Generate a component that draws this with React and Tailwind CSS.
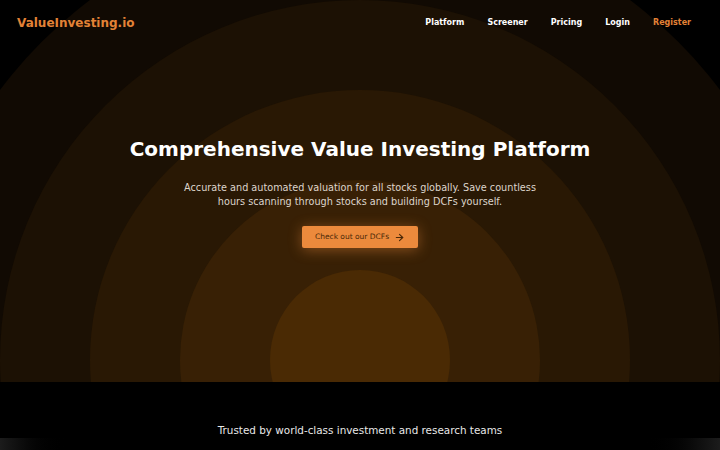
import React from "react";

const font = { fontFamily: '"DejaVu Sans", "Noto Sans", sans-serif' };

function ArrowRight() {
  return (
    <svg width="11" height="11" viewBox="0 0 24 24" fill="none" stroke="currentColor" strokeWidth="2.4" strokeLinecap="round" strokeLinejoin="round">
      <path d="M5 12h14" />
      <path d="m12 5 7 7-7 7" />
    </svg>
  );
}

export default function App() {
  return (
    <div className="w-[720px] h-[450px] overflow-hidden bg-black text-white" style={font}>
      <section className="relative h-[382px] overflow-hidden bg-black">
        {/* concentric glow rings centred on the lower middle of the hero */}
        <div className="absolute left-[-90px] top-[-90px] w-[900px] h-[900px] rounded-full bg-[#110a03]" />
        <div className="absolute left-0 top-0 w-[720px] h-[720px] rounded-full bg-[#1c1104]" />
        <div className="absolute left-[90px] top-[90px] w-[540px] h-[540px] rounded-full bg-[#291804]" />
        <div className="absolute left-[180px] top-[180px] w-[360px] h-[360px] rounded-full bg-[#382005]" />
        <div className="absolute left-[270px] top-[270px] w-[180px] h-[180px] rounded-full bg-[#4a2a04]" />

        <div className="relative flex flex-col h-full">
          <header className="flex items-center justify-between pl-[17px] pr-[29px] h-[44px] pt-[2px]">
            <div className="text-[12px] font-bold text-[#e38236]">ValueInvesting.io</div>
            <nav className="flex items-center gap-[23px] text-[8px] font-bold">
              <span>Platform</span>
              <span>Screener</span>
              <span>Pricing</span>
              <span>Login</span>
              <span className="text-[#e38236]">Register</span>
            </nav>
          </header>

          <div className="flex flex-col items-center pt-[91px]">
            <h1 className="text-[20px] leading-[28px] font-bold text-white">Comprehensive Value Investing Platform</h1>
            <p className="mt-[18px] text-[9.7px] leading-[14px] text-[#ddd5cc] text-center w-[380px]">
              Accurate and automated valuation for all stocks globally. Save countless hours scanning through stocks and building DCFs yourself.
            </p>
            <button className="mt-[17px] w-[116px] h-[22px] rounded-[2px] bg-[#ec8a3c] text-[#4a2808] text-[7.5px] flex items-center justify-center gap-[5px] shadow-[0_2px_14px_rgba(236,138,60,0.45)]">
              <span>Check out our DCFs</span>
              <ArrowRight />
            </button>
          </div>
        </div>
      </section>

      <section className="relative h-[68px] bg-black">
        <p className="pt-[41px] text-center text-[10.4px] leading-[14px] text-[#e8e8e8]">
          Trusted by world-class investment and research teams
        </p>
        <div className="absolute left-0 bottom-0 w-[70px] h-[12px] bg-gradient-to-r from-[#1c1c1c] to-black" />
        <div className="absolute right-0 bottom-0 w-[80px] h-[12px] bg-gradient-to-l from-[#1c1c1c] to-black" />
      </section>
    </div>
  );
}
